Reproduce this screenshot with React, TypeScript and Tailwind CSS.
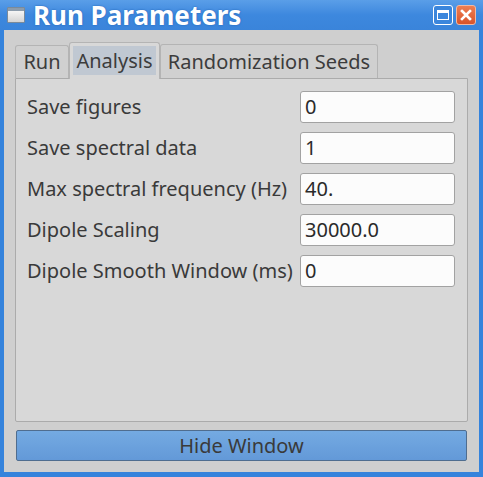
import React from "react";

const rows = [
  { label: "Save figures", value: "0" },
  { label: "Save spectral data", value: "1" },
  { label: "Max spectral frequency (Hz)", value: "40." },
  { label: "Dipole Scaling", value: "30000.0" },
  { label: "Dipole Smooth Window (ms)", value: "0" },
];

function TitleBar() {
  return (
    <div className="relative flex h-[30px] items-center bg-gradient-to-b from-[#5a9ee8] via-[#3d88de] to-[#3a84da]">
      {/* window icon */}
      <div className="ml-[7px] h-[16px] w-[18px] rounded-[1px] border border-[#7a8a9a] bg-gradient-to-b from-[#ffffff] to-[#d4d4d4]">
        <div className="h-[3px] bg-[#8c9cac]" />
      </div>
      <span
        className="ml-[8px] text-[26px] font-bold leading-[30px] text-white"
        style={{ textShadow: "0 0 2px #1d5fb0" }}
      >
        Run Parameters
      </span>
      <div className="ml-auto mr-[7px] flex gap-[3px]">
        <div className="flex h-[20px] w-[20px] items-center justify-center rounded-[3px] border border-white bg-[#3b86dc]">
          <div className="h-[10px] w-[12px] border border-t-[3px] border-white" />
        </div>
        <div className="flex h-[20px] w-[20px] items-center justify-center rounded-[3px] border border-[#f4b8a0] bg-gradient-to-b from-[#ee7e52] to-[#d9542a]">
          <svg width="12" height="12" viewBox="0 0 12 12">
            <path d="M2 2 L10 10 M10 2 L2 10" stroke="white" strokeWidth="2.6" strokeLinecap="square" />
          </svg>
        </div>
      </div>
    </div>
  );
}

export default function App() {
  return (
    <div
      className="flex h-[477px] w-[483px] flex-col bg-[#3583dc]"
      style={{ fontFamily: '"Noto Sans", sans-serif' }}
    >
      <TitleBar />
      <div className="mb-[5px] ml-[4px] mr-[4px] flex flex-1 flex-col bg-[#cfcfcf] px-[11px] pt-[12px]">
        {/* tabs */}
        <div className="flex h-[36px] items-end">
          <div className="flex h-[33px] w-[54px] items-center justify-center rounded-t-[3px] border border-b-0 border-[#b4b4b4] bg-[#d0d0d0] text-[20px] text-[#3c3c3c]">
            Run
          </div>
          <div className="relative z-10 -mb-[1px] flex h-[37px] w-[91px] items-start rounded-t-[3px] border border-b-0 border-[#b4b4b4] bg-[#d8d8d8] px-[3px] pt-[3px]">
            <div className="flex h-[29px] w-full items-center justify-center bg-[#c0c8d2] text-[20px] text-[#3c3c3c]">
              Analysis
            </div>
          </div>
          <div className="flex h-[34px] w-[218px] items-center justify-center rounded-t-[3px] border border-b-0 border-[#b4b4b4] bg-[#d0d0d0] text-[20px] text-[#3c3c3c]">
            Randomization Seeds
          </div>
        </div>
        {/* panel */}
        <div className="flex h-[344px] flex-col gap-[9px] rounded-b-[2px] border border-[#ababab] bg-[#d8d8d8] pl-[11px] pr-[12px] pt-[12px]">
          {rows.map((r) => (
            <div key={r.label} className="flex h-[32px] items-center">
              <span className="text-[20px] text-[#3a3a3a]">{r.label}</span>
              <div className="ml-auto flex h-[32px] w-[155px] items-center rounded-[3px] border border-[#a2a2a2] bg-[#fcfcfc] pl-[4px] text-[20px] text-[#2a2a2a]">
                {r.value}
              </div>
            </div>
          ))}
        </div>
        {/* button */}
        <button className="mx-[1px] mt-[8px] flex h-[31px] items-center justify-center rounded-[2px] border border-[#4f6d8f] bg-gradient-to-b from-[#74aae2] to-[#6399d8] text-[20px] text-[#3a3a3a]">
          Hide Window
        </button>
      </div>
    </div>
  );
}
